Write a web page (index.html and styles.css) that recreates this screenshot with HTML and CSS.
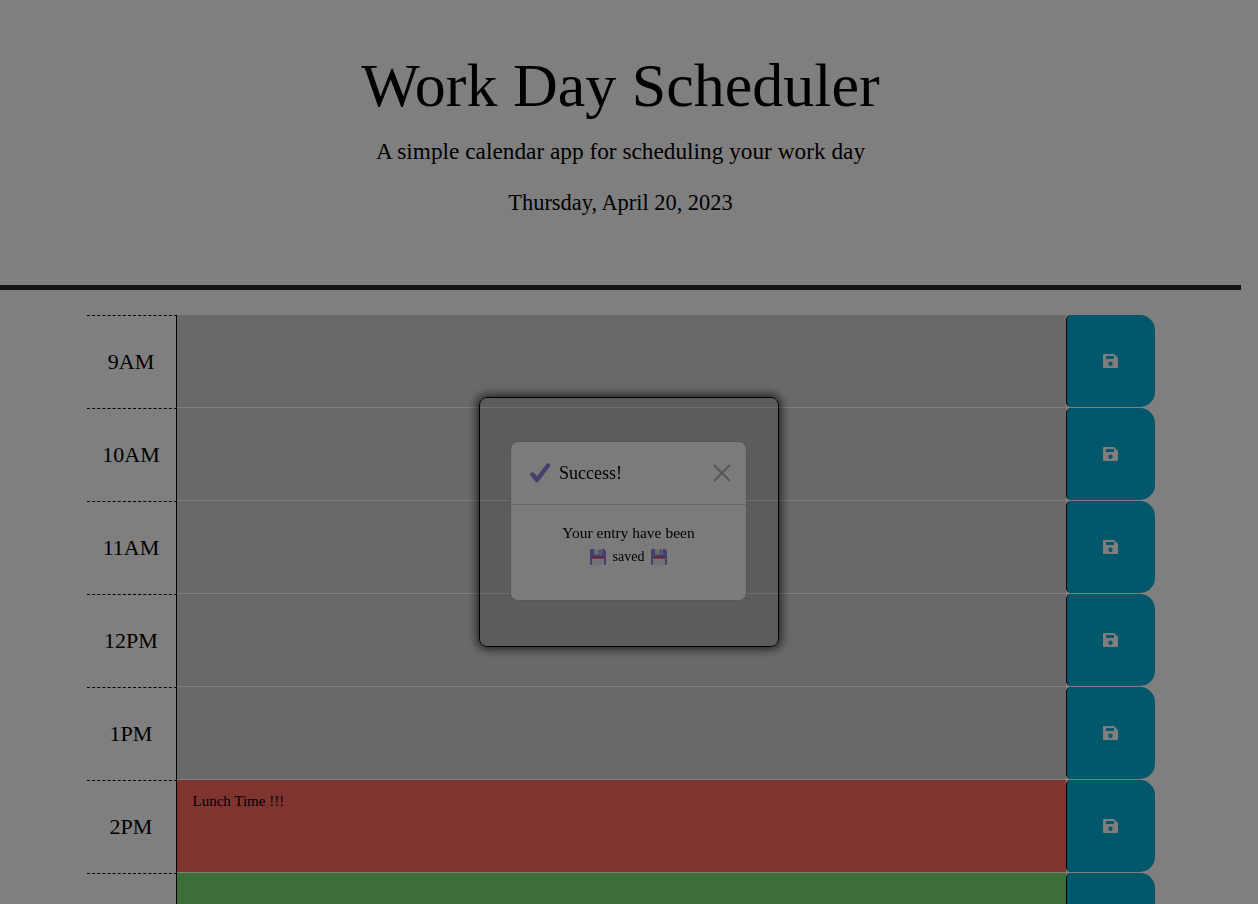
FILE: index.html
```html
<!DOCTYPE html>
<html>
<head>
  <title>Work Day Scheduler</title>
  <link rel="stylesheet" href="styles.css">
</head>
<body>
  <header class="jumbotron">
    <h1>Work Day Scheduler</h1>
    <p class="lead">A simple calendar app for scheduling your work day</p>
    <p class="current-day">Thursday, April 20, 2023</p>
  </header>

  <div class="container">
    <div class="time-block past">
      <div class="hour">9AM</div>
      <div class="description"></div>
      <button class="save-btn"><svg class="save-icon" viewBox="0 0 15 14"><path fill-rule="evenodd" d="M1 0H11L15 4V13Q15 14 14 14H1Q0 14 0 13V1Q0 0 1 0ZM3 2V5H11V2ZM7.5 7.5A2.2 2.2 0 1 0 7.5 11.9A2.2 2.2 0 1 0 7.5 7.5Z"/></svg></button>
    </div>
    <div class="time-block past">
      <div class="hour">10AM</div>
      <div class="description"></div>
      <button class="save-btn"><svg class="save-icon" viewBox="0 0 15 14"><path fill-rule="evenodd" d="M1 0H11L15 4V13Q15 14 14 14H1Q0 14 0 13V1Q0 0 1 0ZM3 2V5H11V2ZM7.5 7.5A2.2 2.2 0 1 0 7.5 11.9A2.2 2.2 0 1 0 7.5 7.5Z"/></svg></button>
    </div>
    <div class="time-block past">
      <div class="hour">11AM</div>
      <div class="description"></div>
      <button class="save-btn"><svg class="save-icon" viewBox="0 0 15 14"><path fill-rule="evenodd" d="M1 0H11L15 4V13Q15 14 14 14H1Q0 14 0 13V1Q0 0 1 0ZM3 2V5H11V2ZM7.5 7.5A2.2 2.2 0 1 0 7.5 11.9A2.2 2.2 0 1 0 7.5 7.5Z"/></svg></button>
    </div>
    <div class="time-block past">
      <div class="hour">12PM</div>
      <div class="description"></div>
      <button class="save-btn"><svg class="save-icon" viewBox="0 0 15 14"><path fill-rule="evenodd" d="M1 0H11L15 4V13Q15 14 14 14H1Q0 14 0 13V1Q0 0 1 0ZM3 2V5H11V2ZM7.5 7.5A2.2 2.2 0 1 0 7.5 11.9A2.2 2.2 0 1 0 7.5 7.5Z"/></svg></button>
    </div>
    <div class="time-block past">
      <div class="hour">1PM</div>
      <div class="description"></div>
      <button class="save-btn"><svg class="save-icon" viewBox="0 0 15 14"><path fill-rule="evenodd" d="M1 0H11L15 4V13Q15 14 14 14H1Q0 14 0 13V1Q0 0 1 0ZM3 2V5H11V2ZM7.5 7.5A2.2 2.2 0 1 0 7.5 11.9A2.2 2.2 0 1 0 7.5 7.5Z"/></svg></button>
    </div>
    <div class="time-block present">
      <div class="hour">2PM</div>
      <div class="description">Lunch Time !!!</div>
      <button class="save-btn"><svg class="save-icon" viewBox="0 0 15 14"><path fill-rule="evenodd" d="M1 0H11L15 4V13Q15 14 14 14H1Q0 14 0 13V1Q0 0 1 0ZM3 2V5H11V2ZM7.5 7.5A2.2 2.2 0 1 0 7.5 11.9A2.2 2.2 0 1 0 7.5 7.5Z"/></svg></button>
    </div>
    <div class="time-block future">
      <div class="hour">3PM</div>
      <div class="description"></div>
      <button class="save-btn"><svg class="save-icon" viewBox="0 0 15 14"><path fill-rule="evenodd" d="M1 0H11L15 4V13Q15 14 14 14H1Q0 14 0 13V1Q0 0 1 0ZM3 2V5H11V2ZM7.5 7.5A2.2 2.2 0 1 0 7.5 11.9A2.2 2.2 0 1 0 7.5 7.5Z"/></svg></button>
    </div>
  </div>

  <div class="modal-wrap">
    <div class="modal">
      <div class="dialog">
        <div class="dialog-header">
          <svg class="check-icon" viewBox="0 0 22 22"><path d="M3.5 12.5L8 18L19 3.5" fill="none" stroke="#8d7cd6" stroke-width="4.4" stroke-linecap="round" stroke-linejoin="round"/></svg>
          <span class="dialog-title">Success!</span>
          <svg class="close-icon" viewBox="0 0 18 18"><path d="M1 1L17 17M17 1L1 17" fill="none" stroke="#aaa" stroke-width="1.8"/></svg>
        </div>
        <div class="dialog-body">
          <div>Your entry have been</div>
          <div class="saved-line">
            <svg class="floppy" viewBox="0 0 16 16"><path d="M1 0H14L16 2V15Q16 16 15 16H1Q0 16 0 15V1Q0 0 1 0Z" fill="#8d7cd6"/><rect x="2" y="8" width="12" height="8" fill="#e4e4ec"/><rect x="2" y="8" width="12" height="1.5" fill="#e0344a"/><rect x="4" y="0" width="8" height="5.5" fill="#d8d8e8"/><rect x="9" y="1" width="2" height="3.5" fill="#8d7cd6"/></svg>
            <span>saved</span>
            <svg class="floppy" viewBox="0 0 16 16"><path d="M1 0H14L16 2V15Q16 16 15 16H1Q0 16 0 15V1Q0 0 1 0Z" fill="#8d7cd6"/><rect x="2" y="8" width="12" height="8" fill="#e4e4ec"/><rect x="2" y="8" width="12" height="1.5" fill="#e0344a"/><rect x="4" y="0" width="8" height="5.5" fill="#d8d8e8"/><rect x="9" y="1" width="2" height="3.5" fill="#8d7cd6"/></svg>
          </div>
        </div>
      </div>
    </div>
  </div>
  <div class="overlay"></div>
</body>
</html>
```

FILE: styles.css
```css
html,
body {
  height: 904px;
  overflow: hidden;
}

body {
  width: 1241px;
  margin: 0;
  font-family: "Liberation Serif", serif;
  background-color: #fff;
  color: #000;
}

.jumbotron {
  height: 235px;
  padding-top: 50px;
  text-align: center;
  border-bottom: 5px solid #282828;
}

.jumbotron h1 {
  margin: 0;
  font-size: 62px;
  font-weight: 400;
  line-height: 70px;
}

.lead {
  margin: 14px 0 0;
  font-size: 23.3px;
  line-height: 34px;
}

.current-day {
  margin: 18px 0 0;
  font-size: 22.4px;
  line-height: 34px;
}

.container {
  width: 1068px;
  margin: 25px auto 0;
}

.time-block {
  display: grid;
  grid-template-columns: 90px 1fr 89px;
  height: 93px;
}

.hour {
  box-sizing: border-box;
  display: flex;
  align-items: center;
  justify-content: center;
  border-top: 1px dashed #000;
  border-right: 1px solid #000;
  font-size: 22px;
}

.description {
  box-sizing: border-box;
  padding: 13px 16px;
  border-bottom: 1px solid #fff;
  font-size: 15px;
}

.past .description {
  background-color: #d3d3d3;
}

.present .description {
  background-color: #ff6961;
}

.future .description {
  background-color: #77dd77;
}

.save-btn {
  display: flex;
  align-items: center;
  justify-content: center;
  padding: 0;
  background-color: #06aed5;
  border: none;
  border-left: 1px solid #000;
  border-radius: 5px 15px 15px 5px;
  height: 92px;
}

.save-icon {
  width: 15px;
  height: 14px;
  fill: #fff;
}

.modal-wrap {
  position: fixed;
  top: 0;
  left: 0;
  width: 1258px;
  height: 904px;
  display: flex;
  justify-content: center;
  align-items: flex-start;
}

.overlay {
  position: fixed;
  top: 0;
  left: 0;
  width: 1258px;
  height: 904px;
  background-color: rgba(0, 0, 0, 0.5);
}

.modal {
  box-sizing: border-box;
  width: 300px;
  height: 250px;
  margin-top: 397px;
  padding: 43px 30px 0;
  background-color: rgba(0, 0, 0, 0.13);
  border: 1px solid #000;
  border-radius: 8px;
  box-shadow: 0 0 8px 3px rgba(0, 0, 0, 0.6);
}

.dialog {
  width: 237px;
  height: 160px;
  box-sizing: border-box;
  background-color: #f6f6f6;
  border: 1px solid rgba(0, 0, 0, 0.3);
  border-radius: 8px;
}

.dialog-header {
  display: flex;
  align-items: center;
  height: 62px;
  padding: 0 15px 0 18px;
  border-bottom: 1px solid #ccc;
}

.check-icon {
  width: 22px;
  height: 22px;
}

.dialog-title {
  margin-left: 8px;
  font-size: 18px;
}

.close-icon {
  width: 18px;
  height: 18px;
  margin-left: auto;
}

.dialog-body {
  padding-top: 16px;
  font-size: 15.5px;
  line-height: 24px;
  text-align: center;
}

.saved-line {
  display: flex;
  align-items: center;
  justify-content: center;
  gap: 7px;
  font-size: 14px;
}

.floppy {
  width: 16px;
  height: 16px;
}
```
